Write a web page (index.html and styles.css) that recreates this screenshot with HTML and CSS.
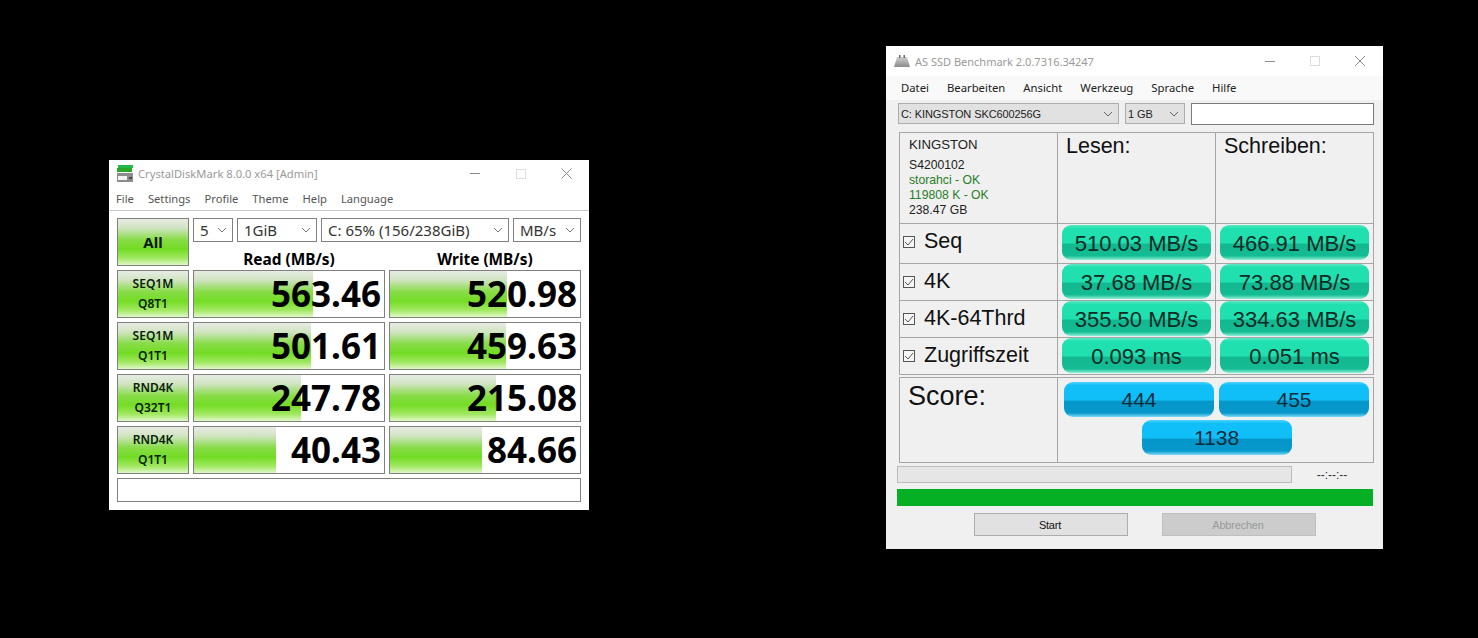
FILE: index.html
```html
<!DOCTYPE html>
<html lang="en">
<head>
  <meta charset="UTF-8">
  <title>Benchmarks</title>
  <link rel="stylesheet" href="styles.css">
</head>
<body>

  <!-- CrystalDiskMark -->
  <div class="window cdm">
    <div class="cdm-title">
      <svg class="cdm-icon" width="17" height="17" viewBox="0 0 17 17">
        <rect x="1" y="0" width="15" height="3" fill="#22b84a"/>
        <rect x="0" y="3" width="15" height="4" fill="#2aa82a"/>
        <rect x="0" y="8" width="16" height="9" fill="#8d8d8d"/>
        <rect x="1" y="11" width="9" height="4" fill="#f2f2f2"/>
        <rect x="12" y="12" width="3" height="2" fill="#4a4a4a"/>
      </svg>
      <span class="cdm-title-text">CrystalDiskMark 8.0.0 x64 [Admin]</span>
      <div class="controls cdm-controls">
        <svg width="10" height="10" viewBox="0 0 10 10"><path d="M0 4.500h10" stroke="#8a8a8a"/></svg>
        <svg width="10" height="10" viewBox="0 0 10 10"><rect x=".5" y=".5" width="9" height="9" fill="none" stroke="#dcdcdc"/></svg>
        <svg width="11" height="11" viewBox="0 0 11 11"><path d="M.5.5l10 10M10.500.5l-10 10" stroke="#8a8a8a"/></svg>
      </div>
    </div>
    <div class="cdm-menu">
      <span>File</span><span>Settings</span><span>Profile</span><span>Theme</span><span>Help</span><span>Language</span>
    </div>
    <div class="cdm-body">
      <div class="tile tile-all">All</div>
      <div class="cdm-top">
        <div class="cdm-selects">
          <div class="cdm-select w40">5<svg width="10" height="6" viewBox="0 0 10 6"><path d="M1 1l4 4 4-4" fill="none" stroke="#777"/></svg></div>
          <div class="cdm-select w80">1GiB<svg width="10" height="6" viewBox="0 0 10 6"><path d="M1 1l4 4 4-4" fill="none" stroke="#777"/></svg></div>
          <div class="cdm-select w188">C: 65% (156/238GiB)<svg width="10" height="6" viewBox="0 0 10 6"><path d="M1 1l4 4 4-4" fill="none" stroke="#777"/></svg></div>
          <div class="cdm-select w68">MB/s<svg width="10" height="6" viewBox="0 0 10 6"><path d="M1 1l4 4 4-4" fill="none" stroke="#777"/></svg></div>
        </div>
        <div class="cdm-heads">
          <div>Read (MB/s)</div>
          <div>Write (MB/s)</div>
        </div>
      </div>

      <div class="tile">SEQ1M<br>Q8T1</div>
      <div class="meter" style="background-size: 119px 100%">563.46</div>
      <div class="meter" style="background-size: 117px 100%">520.98</div>

      <div class="tile">SEQ1M<br>Q1T1</div>
      <div class="meter" style="background-size: 117px 100%">501.61</div>
      <div class="meter" style="background-size: 116px 100%">459.63</div>

      <div class="tile">RND4K<br>Q32T1</div>
      <div class="meter" style="background-size: 107px 100%">247.78</div>
      <div class="meter" style="background-size: 106px 100%">215.08</div>

      <div class="tile">RND4K<br>Q1T1</div>
      <div class="meter" style="background-size: 82px 100%">40.43</div>
      <div class="meter" style="background-size: 92px 100%">84.66</div>

      <div class="cdm-message"></div>
    </div>
  </div>

  <!-- AS SSD -->
  <div class="window asssd">
    <div class="as-title">
      <svg class="as-icon" width="16" height="12" viewBox="0 0 16 12">
        <defs>
          <linearGradient id="driveFill" x1="0" y1="0" x2="0" y2="1">
            <stop offset="0" stop-color="#d0d0d0"/>
            <stop offset="1" stop-color="#8a8a8a"/>
          </linearGradient>
        </defs>
        <path d="M3 2h10l3 10H0z" fill="url(#driveFill)"/>
        <path d="M5 0h1.500v3H5zM9.500 0H11v3H9.500z" fill="#666"/>
      </svg>
      <span class="as-title-text">AS SSD Benchmark 2.0.7316.34247</span>
      <div class="controls as-controls">
        <svg width="10" height="10" viewBox="0 0 10 10"><path d="M0 5.500h10" stroke="#8a8a8a"/></svg>
        <svg width="10" height="10" viewBox="0 0 10 10"><rect x=".5" y=".5" width="9" height="9" fill="none" stroke="#dcdcdc"/></svg>
        <svg width="10" height="10" viewBox="0 0 10 10"><path d="M0 0l10 10M10 0L0 10" stroke="#8a8a8a"/></svg>
      </div>
    </div>
    <div class="as-menu">
      <span>Datei</span><span>Bearbeiten</span><span>Ansicht</span><span>Werkzeug</span><span>Sprache</span><span>Hilfe</span>
    </div>
    <div class="as-body">
      <div class="as-selects">
        <div class="as-select w221">C: KINGSTON SKC600256G<svg width="10" height="6" viewBox="0 0 10 6"><path d="M1 1l4 4 4-4" fill="none" stroke="#666"/></svg></div>
        <div class="as-select w60">1 GB<svg width="10" height="6" viewBox="0 0 10 6"><path d="M1 1l4 4 4-4" fill="none" stroke="#666"/></svg></div>
        <div class="as-input"></div>
      </div>

      <div class="as-table">
        <div class="as-cell as-info">
          <div class="as-brand">KINGSTON</div>
          <div>S4200102</div>
          <div class="ok">storahci - OK</div>
          <div class="ok">119808 K - OK</div>
          <div>238.47 GB</div>
        </div>
        <div class="as-cell as-head">Lesen:</div>
        <div class="as-cell as-head">Schreiben:</div>

        <div class="as-cell"><div class="as-label"><span class="check"><svg width="10" height="10" viewBox="0 0 10 10"><path d="M1 5l3 3 5-6" fill="none" stroke="#555"/></svg></span>Seq</div></div>
        <div class="as-cell as-val first"><div class="pill">510.03 MB/s</div></div>
        <div class="as-cell as-val first"><div class="pill">466.91 MB/s</div></div>

        <div class="as-cell"><div class="as-label"><span class="check"><svg width="10" height="10" viewBox="0 0 10 10"><path d="M1 5l3 3 5-6" fill="none" stroke="#555"/></svg></span>4K</div></div>
        <div class="as-cell as-val"><div class="pill">37.68 MB/s</div></div>
        <div class="as-cell as-val"><div class="pill">73.88 MB/s</div></div>

        <div class="as-cell"><div class="as-label"><span class="check"><svg width="10" height="10" viewBox="0 0 10 10"><path d="M1 5l3 3 5-6" fill="none" stroke="#555"/></svg></span>4K-64Thrd</div></div>
        <div class="as-cell as-val"><div class="pill">355.50 MB/s</div></div>
        <div class="as-cell as-val"><div class="pill">334.63 MB/s</div></div>

        <div class="as-cell"><div class="as-label"><span class="check"><svg width="10" height="10" viewBox="0 0 10 10"><path d="M1 5l3 3 5-6" fill="none" stroke="#555"/></svg></span>Zugriffszeit</div></div>
        <div class="as-cell as-val"><div class="pill">0.093 ms</div></div>
        <div class="as-cell as-val"><div class="pill">0.051 ms</div></div>
      </div>

      <div class="as-score">
        <div class="as-cell as-score-label">Score:</div>
        <div class="as-cell as-score-vals">
          <div class="pill blue">444</div>
          <div class="pill blue">455</div>
          <div class="pill blue total">1138</div>
        </div>
      </div>

      <div class="as-progress">
        <div class="as-track"></div>
        <div class="as-time">--:--:--</div>
      </div>
      <div class="as-green"></div>

      <div class="as-buttons">
        <div class="as-btn">Start</div>
        <div class="as-btn disabled">Abbrechen</div>
      </div>
    </div>
  </div>

</body>
</html>
```

FILE: styles.css
```css
body {
  margin: 0;
  width: 1478px;
  height: 638px;
  overflow: hidden;
  background: #000000;
  position: relative;
  font-family: 'Noto Sans', sans-serif;
}

.window {
  position: absolute;
  box-sizing: border-box;
  color: #000000;
}

.controls {
  display: flex;
  align-items: center;
  margin-left: auto;
}

/* CrystalDiskMark */
.cdm {
  left: 109px;
  top: 160px;
  width: 480px;
  height: 350px;
  background: #ffffff;
}

.cdm-title {
  display: flex;
  align-items: center;
  height: 27px;
  padding: 0 17px 0 8px;
}

.cdm-icon {
  margin-right: 4px;
}

.cdm-title-text {
  font-size: 11.2px;
  color: #999999;
}

.cdm-controls {
  gap: 35.500px;
}

.cdm-menu {
  display: flex;
  gap: 14px;
  align-items: center;
  height: 23px;
  padding-left: 7px;
  font-size: 11.2px;
  color: #555555;
  border-bottom: 1px solid #c8c8c8;
}

.cdm-body {
  display: grid;
  grid-template-columns: 72px 192px 192px;
  grid-auto-rows: 48px;
  gap: 4px;
  padding: 7px 0 0 8px;
}

.tile {
  box-sizing: border-box;
  display: flex;
  align-items: center;
  justify-content: center;
  text-align: center;
  border: 1px solid #808080;
  font-size: 12px;
  font-weight: 600;
  line-height: 20px;
  color: #0a200a;
  background: linear-gradient(#e8ece4 0%, #cfe4c0 20%, #88dc48 45%, #74dc24 65%, #a0e860 85%, #e0f8c8 100%);
}

.tile-all {
  font-size: 15px;
  font-weight: 700;
  color: #0a1a0a;
}

.cdm-top {
  grid-column: span 2;
}

.cdm-selects {
  display: flex;
  gap: 4px;
}

.cdm-select {
  box-sizing: border-box;
  display: flex;
  align-items: center;
  justify-content: space-between;
  height: 24px;
  padding: 0 5px 0 6px;
  border: 1px solid #808080;
  font-size: 15px;
  color: #333333;
}

.w40 { width: 40px; }
.w80 { width: 80px; }
.w188 { width: 188px; }
.w68 { width: 68px; }

.cdm-heads {
  display: grid;
  grid-template-columns: 192px 192px;
  gap: 4px;
  text-align: center;
  font-size: 15.400px;
  font-weight: 700;
  line-height: 35px;
}

.meter {
  box-sizing: border-box;
  border: 1px solid #808080;
  padding-right: 3px;
  text-align: right;
  font-size: 35px;
  font-weight: 700;
  line-height: 46px;
  color: #000000;
  background-image: linear-gradient(#e8ece4 0%, #cfe4c0 20%, #88dc48 45%, #74dc24 65%, #a0e860 85%, #e0f8c8 100%);
  background-repeat: no-repeat;
}

.cdm-message {
  grid-column: span 3;
  height: 24px;
  box-sizing: border-box;
  border: 1px solid #808080;
}

/* AS SSD */
.asssd {
  left: 886px;
  top: 46px;
  width: 497px;
  height: 503px;
  background: #f0f0f0;
  font-family: 'Liberation Sans', sans-serif;
}

.as-title {
  display: flex;
  align-items: center;
  height: 30px;
  padding: 0 18px 0 8px;
  background: #ffffff;
}

.as-icon {
  margin-right: 5px;
}

.as-title-text {
  font-family: 'Noto Sans', sans-serif;
  font-size: 11px;
  color: #999999;
}

.as-controls {
  gap: 35px;
}

.as-menu {
  display: flex;
  gap: 18px;
  align-items: center;
  height: 22px;
  padding: 0 0 2px 15px;
  font-family: 'Noto Sans', sans-serif;
  font-size: 11.300px;
  color: #222222;
  background: #f9f9f9;
}

.as-body {
  padding: 3px 0 0 11px;
}

.as-selects {
  display: flex;
  gap: 6px;
  margin-left: 1px;
  height: 22px;
}

.as-select {
  box-sizing: border-box;
  display: flex;
  align-items: center;
  justify-content: space-between;
  height: 21px;
  padding: 0 5px 0 2px;
  border: 1px solid #adadad;
  background: #e1e1e1;
  font-size: 11px;
  letter-spacing: -0.1px;
  color: #222222;
}

.w221 { width: 221px; }
.w60 { width: 60px; }

.as-input {
  box-sizing: border-box;
  width: 183px;
  height: 22px;
  background: #ffffff;
  border: 1px solid #7a7a7a;
}

.as-table {
  display: grid;
  grid-template-columns: repeat(3, 158px);
  grid-template-rows: 91px 40px 37px 37px 37px;
  width: 475px;
  box-sizing: border-box;
  margin: 7px 0 0 2px;
  border-left: 1px solid #a5a5a5;
  border-top: 1px solid #a5a5a5;
}

.as-cell {
  box-sizing: border-box;
  border-right: 1px solid #a5a5a5;
  border-bottom: 1px solid #a5a5a5;
}

.as-info {
  padding: 3px 0 0 9px;
  font-size: 12.200px;
  line-height: 15px;
  color: #222222;
}

.as-brand {
  font-size: 13.200px;
  line-height: 17px;
  margin-bottom: 5px;
}

.ok {
  color: #2a7d2a;
}

.as-head {
  padding: 0 0 0 8px;
  font-size: 21.500px;
  line-height: 26px;
  color: #111111;
}

.as-label {
  display: flex;
  align-items: center;
  height: 35px;
  padding-left: 3px;
  font-size: 21.500px;
  color: #111111;
}

.check {
  box-sizing: border-box;
  display: flex;
  align-items: center;
  justify-content: center;
  width: 12px;
  height: 12px;
  margin-right: 9px;
  border: 1px solid #555555;
  background: #f6f6f6;
}

.as-val {
  padding: 0 4px;
}

.as-val.first {
  padding-top: 1px;
}

.pill {
  box-sizing: border-box;
  height: 35px;
  border-radius: 9px;
  text-align: center;
  font-size: 22px;
  line-height: 37px;
  color: #0e2a24;
  background: linear-gradient(#5be8c4 0%, #1fe0ae 10%, #1fe0ae 52%, #12b890 54%, #14bc94 88%, #8ff2d6 100%);
}

.pill.blue {
  width: 150px;
  font-size: 21px;
  line-height: 36px;
  color: #0c2c3c;
  background: linear-gradient(#4cd2fb 0%, #10bff8 10%, #10bff8 52%, #0597c9 54%, #0698cb 88%, #7cdcfa 100%);
}

.pill.total {
  grid-column: span 2;
  justify-self: center;
}

.as-score {
  display: grid;
  grid-template-columns: 158px 316px;
  width: 475px;
  height: 86px;
  box-sizing: border-box;
  margin: 2px 0 0 2px;
  border-left: 1px solid #a5a5a5;
  border-top: 1px solid #a5a5a5;
}

.as-score-label {
  padding-left: 8px;
  font-size: 27px;
  line-height: 36px;
  color: #111111;
}

.as-score-vals {
  display: grid;
  grid-template-columns: 150px 150px;
  grid-auto-rows: 35px;
  column-gap: 5px;
  row-gap: 3px;
  padding: 4px 0 0 6px;
}

.as-progress {
  display: flex;
  align-items: center;
  margin-top: 3px;
  height: 17px;
}

.as-track {
  box-sizing: border-box;
  width: 395px;
  height: 17px;
  background: #e6e6e6;
  border: 1px solid #bcbcbc;
}

.as-time {
  width: 80px;
  text-align: center;
  font-size: 12px;
  color: #333333;
}

.as-green {
  width: 476px;
  height: 17px;
  margin-top: 6px;
  background: #06b025;
}

.as-buttons {
  display: flex;
  gap: 34px;
  margin: 7px 0 0 77px;
}

.as-btn {
  box-sizing: border-box;
  width: 154px;
  height: 23px;
  padding-right: 2px;
  text-align: center;
  font-size: 11px;
  letter-spacing: -0.2px;
  line-height: 22px;
  color: #111111;
  background: #e1e1e1;
  border: 1px solid #adadad;
}

.as-btn.disabled {
  color: #9a9a9a;
  background: #cccccc;
  border-color: #bfbfbf;
}
```
